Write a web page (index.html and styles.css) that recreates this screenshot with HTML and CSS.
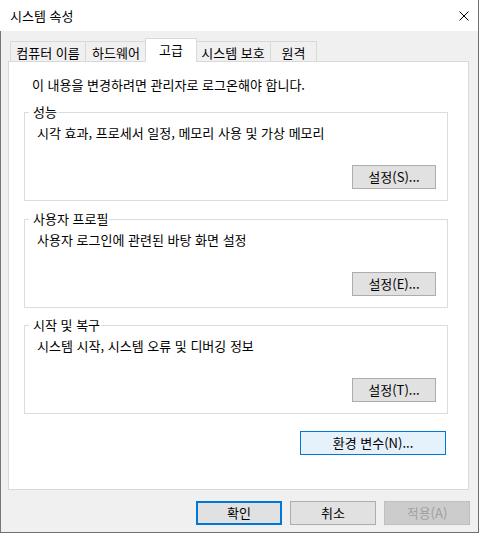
FILE: index.html
```html
<!DOCTYPE html>
<html lang="ko">
<head>
<meta charset="utf-8">
<title>시스템 속성</title>
<link rel="stylesheet" href="styles.css">
</head>
<body>
<div class="window">
  <div class="titlebar">
    <span class="title">시스템 속성</span>
    <span class="close" aria-label="닫기">
      <svg width="10" height="10" viewBox="0 0 10 10"><path d="M0.5 0.5 L9.5 9.5 M9.5 0.5 L0.5 9.5" stroke="#000" stroke-width="1" fill="none"/></svg>
    </span>
  </div>
  <div class="client">
    <div class="tabs">
      <div class="tab t1">컴퓨터 이름</div>
      <div class="tab t2">하드웨어</div>
      <div class="tab active">고급</div>
      <div class="tab t4">시스템 보호</div>
      <div class="tab t5">원격</div>
    </div>
    <div class="panel">
      <p class="notice">이 내용을 변경하려면 관리자로 로그온해야 합니다.</p>
      <fieldset class="group g1">
        <legend>성능</legend>
        <div class="group-body">
          <p class="desc">시각 효과, 프로세서 일정, 메모리 사용 및 가상 메모리</p>
          <div class="btn-row"><button class="btn">설정(S)...</button></div>
        </div>
      </fieldset>
      <fieldset class="group g2">
        <legend>사용자 프로필</legend>
        <div class="group-body">
          <p class="desc">사용자 로그인에 관련된 바탕 화면 설정</p>
          <div class="btn-row"><button class="btn">설정(E)...</button></div>
        </div>
      </fieldset>
      <fieldset class="group g3">
        <legend>시작 및 복구</legend>
        <div class="group-body">
          <p class="desc">시스템 시작, 시스템 오류 및 디버깅 정보</p>
          <div class="btn-row"><button class="btn">설정(T)...</button></div>
        </div>
      </fieldset>
      <div class="env-row"><button class="btn btn-hot">환경 변수(N)...</button></div>
    </div>
    <div class="dialog-buttons">
      <button class="btn btn-dlg btn-default">확인</button>
      <button class="btn btn-dlg">취소</button>
      <button class="btn btn-dlg btn-disabled" disabled>적용(A)</button>
    </div>
  </div>
</div>
</body>
</html>
```

FILE: styles.css
```css
* { box-sizing: border-box; }

html, body {
  margin: 0;
  padding: 0;
  background: #f0f0f0;
}

body {
  font-family: "Noto Sans CJK KR", "Noto Sans", sans-serif;
  font-size: 13px;
  line-height: 16px;
  color: #000;
}

.window {
  width: 479px;
  height: 533px;
  display: flex;
  flex-direction: column;
}

.titlebar {
  height: 31px;
  flex: none;
  background: #fff;
  border-right: 1px solid #6f6f6f;
  display: flex;
  align-items: center;
  justify-content: space-between;
  padding: 0 9px 0 10px;
}

.title {
  line-height: 16px;
}

.close {
  width: 10px;
  height: 10px;
  display: flex;
}

.client {
  flex: 1;
  background: #f0f0f0;
  border-left: 1px solid #777;
  border-right: 1px solid #6f6f6f;
  border-bottom: 1px solid #6f6f6f;
  padding: 7px 9px 0 7px;
  display: flex;
  flex-direction: column;
}

.tabs {
  display: flex;
  align-items: flex-end;
  height: 23px;
  padding-left: 2px;
}

.tab {
  height: 20px;
  border: 1px solid #d9d9d9;
  border-bottom: none;
  background: #f0f0f0;
  text-align: center;
  line-height: 19px;
  padding-top: 1px;
  white-space: nowrap;
}

.t1 { width: 76px; }
.t2 { width: 62px; margin-left: -1px; }
.active {
  width: 52px;
  height: 24px;
  margin: 0 -2px -1px -2px;
  background: #fff;
  position: relative;
  z-index: 1;
  line-height: 19px;
  padding-top: 1px;
}
.t4 { width: 76px; }
.t5 { width: 47px; margin-left: -1px; }

.panel {
  width: 461px;
  height: 429px;
  background: #fff;
  border: 1px solid #d9d9d9;
  padding: 15px 20px 0 15px;
  display: flex;
  flex-direction: column;
}

.notice {
  margin: 0 0 0 8px;
}

.group {
  margin: 11px 0 0 0;
  padding: 0;
  border: 1px solid #dcdcdc;
  min-width: 0;
}

.g2 { margin-top: 10px; }
.g3 { margin-top: 9px; }

.group legend {
  margin-left: 4px;
  padding: 0 1px 0 4px;
  line-height: 16px;
}

.group-body {
  padding: 5px 11px 11px 12px;
  display: flex;
  flex-direction: column;
}

.desc {
  margin: 0;
}

.btn-row {
  display: flex;
  justify-content: flex-end;
  margin-top: 24px;
}

.btn {
  font-family: "Noto Sans CJK KR", "Noto Sans", sans-serif;
  font-size: 13px;
  line-height: 16px;
  color: #000;
  background: #e1e1e1;
  border: 1px solid #adadad;
  border-radius: 0;
  width: 84px;
  height: 24px;
  padding: 0;
  margin: 0;
}

.env-row {
  display: flex;
  justify-content: flex-end;
  margin-top: 17px;
  padding-right: 2px;
}

.btn-hot {
  width: 146px;
  background: #e5f1fb;
  border-color: #0078d7;
}

.dialog-buttons {
  display: flex;
  justify-content: flex-end;
  gap: 8px;
  margin-top: 11px;
  margin-right: -1px;
}

.btn-dlg {
  width: 86px;
  height: 24px;
}

.btn-default {
  border: 2px solid #0078d7;
}

.btn-disabled {
  background: #cccccc;
  border-color: #bfbfbf;
  color: #a0a0a0;
}
```
